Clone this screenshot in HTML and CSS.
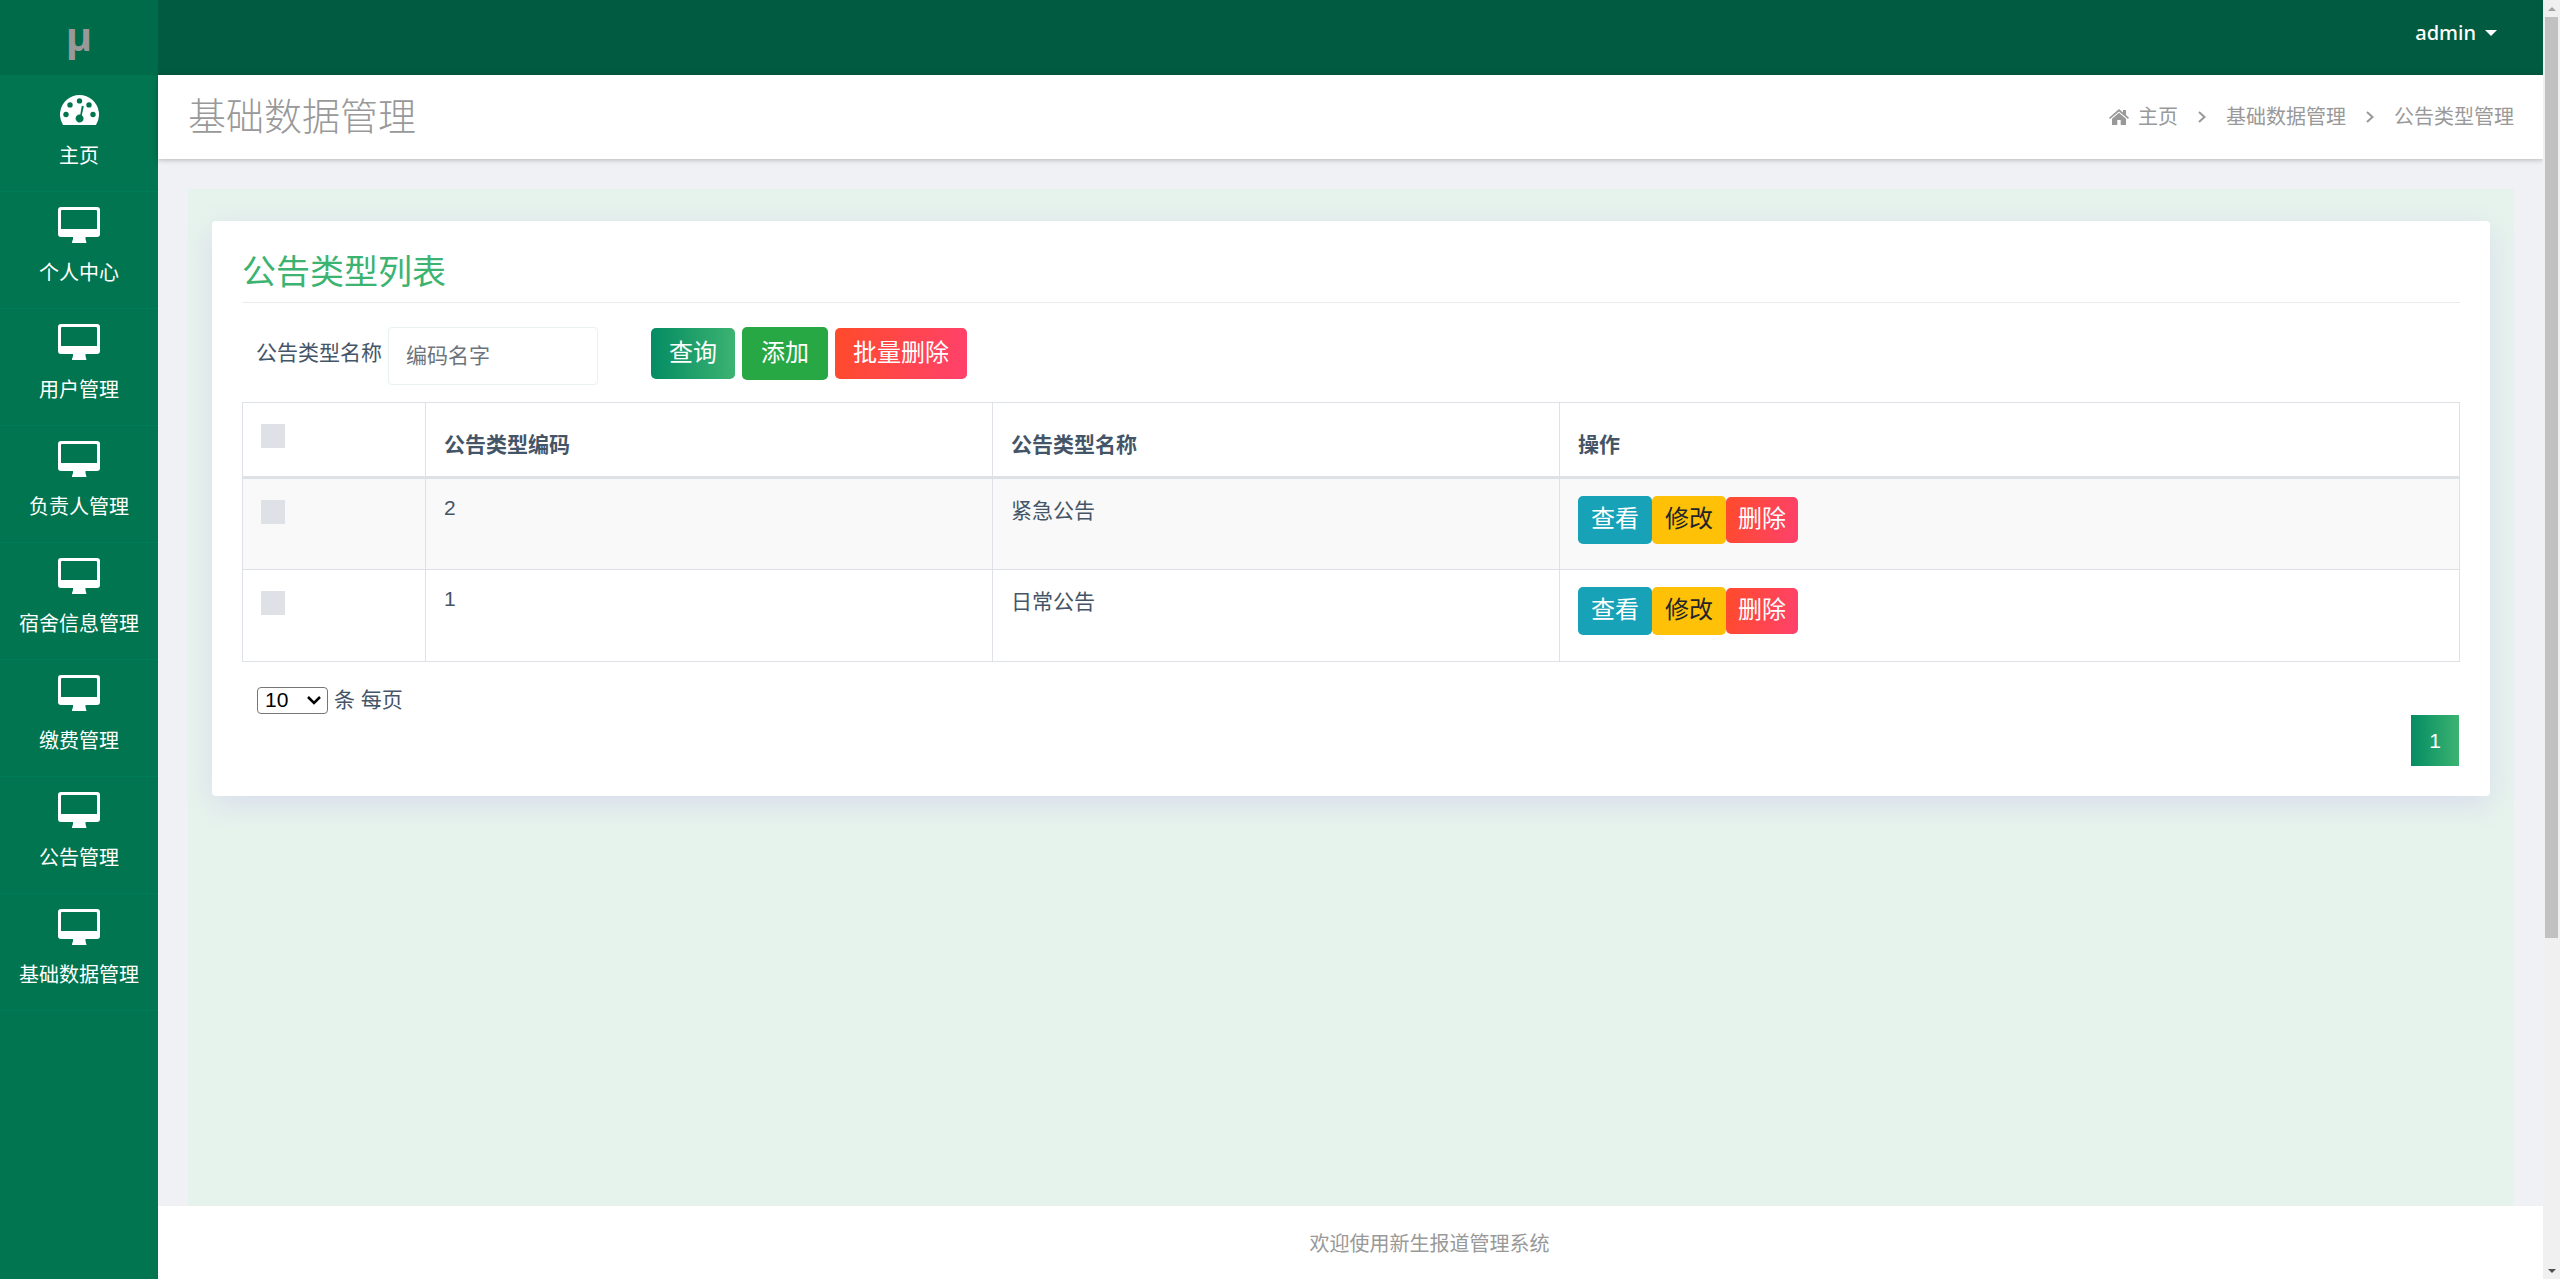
FILE: index.html
```html
<!DOCTYPE html>
<html lang="zh-CN">
<head>
<meta charset="utf-8">
<title>公告类型管理</title>
<link rel="stylesheet" href="styles.css">
</head>
<body>
<svg class="sprite" aria-hidden="true">
  <symbol id="desktop" viewBox="0 0 42 36">
    <path fill-rule="evenodd" d="M3 0H39A3 3 0 0 1 42 3V27A3 3 0 0 1 39 30H27.500V32L28.500 36H14V35L15 32V30H3A3 3 0 0 1 0 27V3A3 3 0 0 1 3 0ZM4 3A1 1 0 0 0 3 4V22H39V4A1 1 0 0 0 38 3Z"/>
  </symbol>
  <symbol id="gauge" viewBox="0 0 39 30">
    <path fill-rule="evenodd" d="M3 30A19.500 19.500 0 1 1 36 30ZM19.500 3.200a2.700 2.700 0 1 0 0 5.400a2.700 2.700 0 1 0 0-5.400ZM10 7.200a2.700 2.700 0 1 0 0 5.400a2.700 2.700 0 1 0 0-5.400ZM29 7.200a2.700 2.700 0 1 0 0 5.400a2.700 2.700 0 1 0 0-5.400ZM6 16.800a2.700 2.700 0 1 0 0 5.400a2.700 2.700 0 1 0 0-5.400ZM33 16.800a2.700 2.700 0 1 0 0 5.400a2.700 2.700 0 1 0 0-5.400ZM21.800 10.800L20.300 19.600A4 4 0 1 0 21.800 20.200L23.800 11.300Z"/>
  </symbol>
</svg>
<div class="app">
  <nav class="sidebar">
    <a class="logo" href="#">µ</a>
    <a class="item" href="#"><svg class="gauge"><use href="#gauge"/></svg>主页</a>
    <a class="item" href="#"><svg><use href="#desktop"/></svg>个人中心</a>
    <a class="item" href="#"><svg><use href="#desktop"/></svg>用户管理</a>
    <a class="item" href="#"><svg><use href="#desktop"/></svg>负责人管理</a>
    <a class="item" href="#"><svg><use href="#desktop"/></svg>宿舍信息管理</a>
    <a class="item" href="#"><svg><use href="#desktop"/></svg>缴费管理</a>
    <a class="item" href="#"><svg><use href="#desktop"/></svg>公告管理</a>
    <a class="item" href="#"><svg><use href="#desktop"/></svg>基础数据管理</a>
  </nav>
  <div class="page">
    <header class="topbar"><button class="user" type="button">admin<span class="caret"></span></button></header>
    <div class="titlebar">
      <h1>基础数据管理</h1>
      <nav class="crumbs">
        <a href="#"><svg viewBox="0 0 20 16"><path d="M10 0L14 3.400V1H17V6L20 8.700L19 10L10 2.400L1 10L0 8.700ZM10 3.800L17 9.700V16H11.700V11H8.300V16H3V9.700Z"/></svg>主页</a>
        <svg class="sep" viewBox="0 0 8 12"><path d="M1 1L6.500 6L1 11"/></svg>
        <a href="#">基础数据管理</a>
        <svg class="sep" viewBox="0 0 8 12"><path d="M1 1L6.500 6L1 11"/></svg>
        <span>公告类型管理</span>
      </nav>
    </div>
    <main class="content">
      <div class="panel">
        <section class="card">
          <h2>公告类型列表</h2>
          <form class="search">
            <label for="name">公告类型名称</label>
            <input id="name" type="text" placeholder="编码名字">
            <div class="actions">
              <button class="btn query" type="button">查询</button>
              <button class="btn add" type="button">添加</button>
              <button class="btn danger" type="button">批量删除</button>
            </div>
          </form>
          <table>
            <colgroup><col class="c-check"><col class="c-data"><col class="c-data"><col></colgroup>
            <thead>
              <tr><th class="check"><input type="checkbox" aria-label="全选"></th><th>公告类型编码</th><th>公告类型名称</th><th>操作</th></tr>
            </thead>
            <tbody>
              <tr>
                <td class="check"><input type="checkbox" aria-label="选择 2"></td><td class="code">2</td><td>紧急公告</td>
                <td><div class="ops"><button class="btn small view" type="button">查看</button><button class="btn small edit" type="button">修改</button><button class="btn small danger" type="button">删除</button></div></td>
              </tr>
              <tr>
                <td class="check"><input type="checkbox" aria-label="选择 1"></td><td class="code">1</td><td>日常公告</td>
                <td><div class="ops"><button class="btn small view" type="button">查看</button><button class="btn small edit" type="button">修改</button><button class="btn small danger" type="button">删除</button></div></td>
              </tr>
            </tbody>
          </table>
          <div class="paging">
            <div class="size"><select id="size"><option>10</option><option>25</option></select><label for="size">条 每页</label></div>
            <a class="current" href="#">1</a>
          </div>
        </section>
      </div>
    </main>
    <footer>欢迎使用新生报道管理系统</footer>
  </div>
  <div class="scrollbar" aria-hidden="true"><i class="up"></i><i class="thumb"></i><i class="down"></i></div>
</div>
</body>
</html>
```
FILE: styles.css
```css
* { box-sizing: border-box; }
body {
  margin: 0;
  font-family: "Liberation Sans", "Noto Sans CJK SC", sans-serif;
  font-size: 21px;
  font-weight: 400;
  line-height: 32px;
  color: #455568;
}
a { color: inherit; text-decoration: none; }
button, input, select { font: inherit; }
button { cursor: pointer; }
.sprite { display: none; }
.app { display: flex; min-height: 100vh; }

.sidebar { flex: 0 0 158px; background: #007550; color: #fff; }
.logo {
  display: flex;
  align-items: center;
  justify-content: center;
  height: 75px;
  padding-bottom: 4px;
  background: #006b49;
  color: #999;
  font: bold 40px/48px "Open Sans", sans-serif;
}
.item {
  display: flex;
  flex-direction: column;
  align-items: center;
  gap: 14px;
  height: 117px;
  padding-top: 15px;
  border-bottom: 1px solid #007d57;
  font-size: 20px;
}
.item svg { width: 42px; height: 36px; fill: #fff; }
.item .gauge { width: 39px; padding-top: 4px; }

.page { flex: 1; display: flex; flex-direction: column; min-width: 0; background: #eff1f5; }
.topbar { display: flex; justify-content: flex-end; align-items: flex-start; height: 75px; padding: 17px 46px; background: #005b40; }
.user {
  display: flex;
  align-items: center;
  gap: 9px;
  padding: 0;
  border: 0;
  background: none;
  color: #fff;
  font: 500 20px/32px "Noto Sans", sans-serif;
}
.caret { border: 6px solid transparent; border-top-color: #fff; border-bottom: 0; }
.titlebar {
  display: flex;
  justify-content: space-between;
  align-items: center;
  height: 84px;
  padding: 0 29px 0 30px;
  background: #fff;
  box-shadow: 0 1px 5px rgba(0, 0, 0, .25);
  color: #999;
}
h1 { margin: 0; font-size: 38px; font-weight: 300; line-height: 48px; }
.crumbs { display: flex; align-items: center; font-size: 20px; }
.crumbs a { display: flex; align-items: center; gap: 9px; }
.crumbs a svg { width: 20px; height: 16px; fill: #999; }
.crumbs .sep { width: 8px; height: 12px; margin: 0 20px; fill: none; stroke: #999; stroke-width: 2; }

.content { flex: 1; display: flex; padding: 30px 29px 0 30px; }
.panel { flex: 1; padding: 32px 24px; background: #e6f3ec; }
.card {
  padding: 29px 30px 30px;
  border-radius: 4px;
  background: #fff;
  box-shadow: 0 8px 30px #d8dcec;
}
h2 {
  margin: 0 0 24px;
  padding-bottom: 8px;
  border-bottom: 1px solid #e9ecef;
  color: #3cb371;
  font-size: 34px;
  font-weight: 400;
  line-height: 44px;
}
.search { display: flex; align-items: flex-start; padding-left: 14px; margin-bottom: 17px; }
.search label { margin: 10px 6px 0 0; }
.search input {
  width: 210px;
  height: 58px;
  padding: 0 17px;
  border: 1px solid #e6f3ec;
  border-radius: 4px;
  color: #6c757d;
}
.search input::placeholder { color: #6c757d; opacity: 1; }
.actions { display: flex; align-items: center; gap: 7px; margin-left: 53px; }
.btn {
  height: 51px;
  padding: 0 18px 2px;
  border: 0;
  border-radius: 5px;
  color: #fff;
  font-size: 24px;
  line-height: 36px;
}
.query { background: linear-gradient(90deg, #048c63, #3cb371); }
.add { height: 53px; padding: 0 19px 2px; background: #28a745; }
.danger { background: linear-gradient(100deg, #ff4b2b, #ff416c); }

table { width: 100%; table-layout: fixed; border-collapse: collapse; }
.c-check { width: 183px; }
.c-data { width: 567px; }
th, td { height: 92px; padding: 16px 18px; border: 1px solid #dee2e6; text-align: left; vertical-align: top; }
th { height: 75px; padding-bottom: 15px; border-bottom-width: 3px; font-weight: 700; vertical-align: bottom; }
th.check { vertical-align: top; }
.check { padding-top: 21px; }
.code { padding-top: 13px; }
.check input { display: block; appearance: none; width: 24px; height: 24px; margin: 0; background: #dee2e6; }
tbody tr:nth-child(odd) { background: #f9f9f9; }
.ops { display: flex; align-items: center; padding-top: 1px; }
.btn.small { height: 46px; padding: 0 12px 2px; }
.btn.view, .btn.edit { height: 48px; padding: 0 13px 2px; }
.view { background: #17a2b8; }
.edit { background: #ffc107; color: #212529; }

.paging { display: flex; justify-content: space-between; align-items: flex-start; padding: 22px 1px 0 15px; }
.size { display: flex; align-items: center; gap: 6px; }
.size select {
  appearance: none;
  width: 71px;
  height: 27px;
  padding: 0 7px;
  border: 1px solid #767676;
  border-radius: 4px;
  background: #fff url("data:image/svg+xml,%3Csvg xmlns='http://www.w3.org/2000/svg' width='14' height='10'%3E%3Cpath d='M1 2l6 6 6-6' fill='none' stroke='%23000' stroke-width='2.500'/%3E%3C/svg%3E") no-repeat right 6px center;
  color: #000;
  line-height: 24px;
}
.current {
  width: 48px;
  height: 42px;
  margin-top: 31px;
  background: linear-gradient(90deg, #048c63, #3cb371);
  color: #fff;
  line-height: 42px;
  text-align: center;
}
.current { height: 51px; line-height: 51px; }
footer { height: 73px; padding: 2px 0 0 158px; background: #fff; color: #999; font-size: 20px; line-height: 73px; text-align: center; }

.scrollbar { flex: 0 0 17px; display: flex; flex-direction: column; align-items: center; padding: 7px 0 3px; background: #f0f0f0; }
.scrollbar .up { border: 4px solid transparent; border-bottom-color: #a3a3a3; border-top: 0; }
.scrollbar .thumb { width: 13px; height: 72vh; margin-top: 6px; background: #c1c1c1; }
.scrollbar .down { margin: auto 0 3px; border: 4px solid transparent; border-top-color: #505050; border-bottom: 0; }
```
